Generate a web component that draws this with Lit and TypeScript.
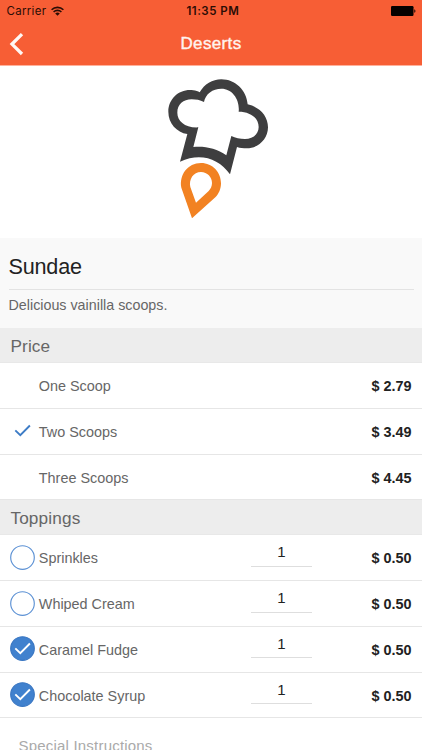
import { LitElement, html, css, svg } from "lit";
import { customElement, property } from "lit/decorators.js";

interface Price { name: string; price: string; selected?: boolean }
interface Topping { name: string; price: string; quantity: number; selected?: boolean }

const prices: Price[] = [
  { name: "One Scoop", price: "$ 2.79" },
  { name: "Two Scoops", price: "$ 3.49", selected: true },
  { name: "Three Scoops", price: "$ 4.45" },
];

const toppings: Topping[] = [
  { name: "Sprinkles", price: "$ 0.50", quantity: 1 },
  { name: "Whiped Cream", price: "$ 0.50", quantity: 1 },
  { name: "Caramel Fudge", price: "$ 0.50", quantity: 1, selected: true },
  { name: "Chocolate Syrup", price: "$ 0.50", quantity: 1, selected: true },
];

@customElement("status-bar")
class StatusBar extends LitElement {
  static styles = css`
    :host {
      display: grid;
      grid-template-columns: 1fr auto 1fr;
      align-items: center;
      height: 22px;
      padding: 0 6px 0 6.6px;
      font: 11.5px/22px Inter, sans-serif;
      color: #2b0d05;
    }
    .carrier { display: flex; align-items: center; gap: 4.5px; letter-spacing: 0.28px; }
    .time { font-weight: 600; letter-spacing: 0.5px; padding-left: 3.2px; }
    .battery { justify-self: end; }
    svg { display: block; }
  `;
  render() {
    return html`
      <div class="carrier">
        <span>Carrier</span>
        <svg width="13" height="10" viewBox="0 0 13 10">
          <g fill="none" stroke="#2b0d05" stroke-width="1.6">
            <path d="M.6 3.8a8.3 8.3 0 0 1 11.8 0" />
            <path d="M2.6 6a5.5 5.5 0 0 1 7.8 0" />
          </g>
          <path d="M6.5 9.8 4.2 7.5a3.3 3.3 0 0 1 4.6 0z" fill="#2b0d05" />
        </svg>
      </div>
      <span class="time">11:35 PM</span>
      <svg class="battery" width="25" height="10" viewBox="0 0 25 10">
        <rect width="22.5" height="10" rx="1.2" fill="#050100" />
        <path d="M23.3 3.2c1.5.5 1.5 3.1 0 3.6z" fill="#050100" />
      </svg>
    `;
  }
}

@customElement("check-mark")
class CheckMark extends LitElement {
  @property({ type: Boolean }) round = false;
  @property({ type: Boolean }) checked = false;
  static styles = css`
    :host { display: block; width: 25px; height: 25px; }
    svg { display: block; }
  `;
  render() {
    const tick = this.round ? "#fff" : "#3d7cc6";
    return html`
      <svg width="25" height="25" viewBox="0 0 25 25">
        ${this.round
          ? svg`<circle cx="12.5" cy="12.5" r="11.8" fill=${this.checked ? "#4081ce" : "#fff"}
              stroke=${this.checked ? "#3976c2" : "#5c91d4"} stroke-width="1.15" />`
          : ""}
        ${this.checked
          ? svg`<path d="m5.3 12.4 5 4.8 9.6-9.7" fill="none" stroke=${tick} stroke-width="1.9" />`
          : ""}
      </svg>
    `;
  }
}

@customElement("chef-logo")
class ChefLogo extends LitElement {
  static styles = css`
    :host { display: block; }
    svg { display: block; }
  `;
  render() {
    return html`
      <svg width="130" height="165" viewBox="0 0 390 495" fill-rule="evenodd">
        <path fill="#3e3e3f" d="M90 290 112 207C80 202 55 175 55 140 55 100 90 70 130 76 137 77 144 79 149 82 163 58 187 43 214 43 256 43 290 76 293 118 328 126 354 152 354 187 354 222 325 250 290 250 280 250 270 249 261 246L240 328C205 279 150 263 90 290ZM145 187 130 246C165 243 200 250 229 271L244 213C256 219 270 222 285 222 308 222 326 208 326 186 326 158 300 140 266 140 270 105 248 71 214 71 188 71 166 87 162 111 150 105 138 103 125 103 100 103 82 118 82 143 82 168 105 189 145 187Z" />
        <path fill="#f28222" d="M126 460 94 368C87 330 113 294 153 294 188 294 213 322 213 355 213 372 206 387 196 397ZM138 413 176 378C182 372 186 364 186 354 186 336 172 321 153 321 130 321 116 343 121 366Z" />
      </svg>
    `;
  }
}

@customElement("app-root")
class AppRoot extends LitElement {
  static styles = css`
    :host {
      display: flex;
      flex-direction: column;
      height: 750px;
      overflow: hidden;
      background: #fff;
      font-family: "Liberation Sans", Arial, sans-serif;
      color: #666;
    }
    .header {
      flex: none;
      box-sizing: border-box;
      height: 66px;
      background: #f75e35;
      border-bottom: 1px solid #ffb19c;
    }
    .nav {
      display: grid;
      grid-template-columns: 1fr auto 1fr;
      align-items: center;
      height: 43px;
      padding: 0 9px;
    }
    .back { display: block; }
    .title {
      font-size: 17px;
      line-height: 43px;
      color: #fff4ef;
      letter-spacing: 0.35px;
      -webkit-text-stroke: 0.4px #fff4ef;
    }
    .hero { flex: none; height: 172px; display: flex; padding-left: 150px; }
    .hero chef-logo { margin-top: -1px; }
    .info {
      flex: none;
      box-sizing: border-box;
      height: 90px;
      padding: 0 8.5px;
      background: #f9f9f9;
    }
    .name {
      box-sizing: border-box;
      height: 51.5px;
      padding-top: 4px;
      border-bottom: 1.5px solid #e3e3e3;
      font-size: 21.6px;
      line-height: 50px;
      color: #222;
      letter-spacing: -0.2px;
    }
    .description { font-size: 14.3px; line-height: 31px; }
    .section {
      flex: none;
      box-sizing: border-box;
      height: 35px;
      padding-left: 10.4px;
      background: #ededed;
      border-bottom: 1px solid #e8e8e8;
      font-size: 17.2px;
      line-height: 36px;
      letter-spacing: 0.15px;
    }
    .row {
      flex: none;
      box-sizing: border-box;
      height: 45.75px;
      display: grid;
      grid-template-columns: 28.5px 212px 61px 1fr;
      align-items: center;
      padding: 0 10.4px 0 10.3px;
      border-bottom: 1px solid #e6e6e6;
    }
    .label { font-size: 14.4px; line-height: 20px; padding-top: 1.5px; white-space: nowrap; }
    .amount {
      grid-column: 4;
      justify-self: end;
      padding-top: 1.5px;
      font-size: 14.4px;
      line-height: 20px;
      font-weight: 700;
      color: #222;
    }
    .quantity {
      align-self: start;
      box-sizing: border-box;
      height: 31.5px;
      border-bottom: 1.5px solid #dedede;
      font-size: 15px;
      line-height: 34px;
      text-align: center;
      color: #222;
    }
    .mark { margin-top: -0.3px; }
    .notes { flex: none; padding: 18px 0 0 18.5px; font-size: 15px; line-height: 20px; letter-spacing: 0.2px; color: #aaa; }
  `;

  render() {
    return html`
      <div class="header">
        <status-bar></status-bar>
        <div class="nav">
          <svg class="back" width="15" height="24" viewBox="0 0 15 24">
            <path d="M13 2.2 3 12.1l10 9.9" fill="none" stroke="#fff8f5" stroke-width="3.3" />
          </svg>
          <div class="title">Deserts</div>
        </div>
      </div>
      <div class="hero"><chef-logo></chef-logo></div>
      <div class="info">
        <div class="name">Sundae</div>
        <div class="description">Delicious vainilla scoops.</div>
      </div>
      <div class="section">Price</div>
      ${prices.map((p) => html`
        <div class="row">
          <check-mark class="mark" ?checked=${p.selected}></check-mark>
          <span class="label">${p.name}</span>
          <span class="amount">${p.price}</span>
        </div>`)}
      <div class="section">Toppings</div>
      ${toppings.map((t) => html`
        <div class="row">
          <check-mark class="mark" round ?checked=${t.selected}></check-mark>
          <span class="label">${t.name}</span>
          <div class="quantity">${t.quantity}</div>
          <span class="amount">${t.price}</span>
        </div>`)}
      <div class="notes">Special Instructions</div>
    `;
  }
}
